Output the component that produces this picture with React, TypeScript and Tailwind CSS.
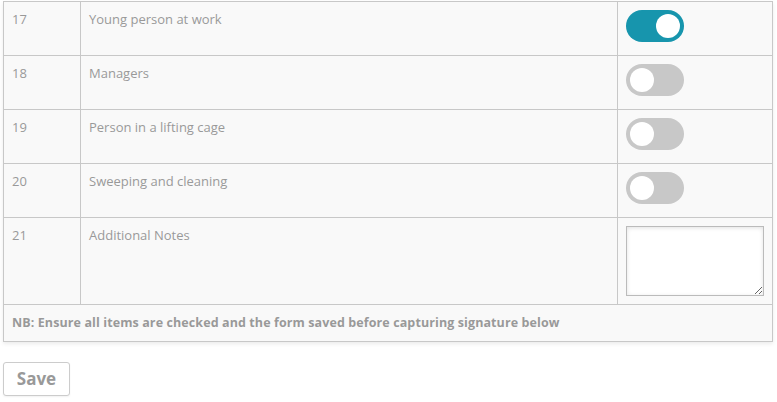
import { useState } from "react";

const rows = [
    { no: 17, label: "Young person at work", on: true },
    { no: 18, label: "Managers", on: false },
    { no: 19, label: "Person in a lifting cage", on: false },
    { no: 20, label: "Sweeping and cleaning", on: false },
];

const Toggle = ({ on, onClick }: { on: boolean; onClick: () => void }) => (
    <button
        type="button"
        onClick={onClick}
        className={`relative w-[58px] h-[32px] rounded-full ${on ? "bg-[#1795ad]" : "bg-[#c8c8c8]"}`}
    >
        <span
            className={`absolute top-[4px] w-[24px] h-[24px] rounded-full bg-white ${on ? "left-[30px]" : "left-[4px]"}`}
        />
    </button>
);

const App = () => {
    const [states, setStates] = useState(rows.map((r) => r.on));

    return (
        <div className="pt-px pl-[3px] pr-[4px] bg-white min-h-[402px]" style={{ fontFamily: "'Open Sans', Lato, sans-serif" }}>
            <table className="w-[770px] border-collapse bg-[#f9f9f9] text-[13px] text-[#999] shadow-[0_2px_4px_rgba(0,0,0,0.08)]">
                <tbody>
                    {rows.map((r, i) => (
                        <tr key={r.no} className="h-[54px]">
                            <td className="w-[77px] border border-[#c8c8c8] align-top px-[8px] pt-[7px] leading-[20px]">{r.no}</td>
                            <td className="w-[537px] border border-[#c8c8c8] align-top px-[8px] pt-[7px] leading-[20px]">{r.label}</td>
                            <td className="border border-[#c8c8c8] align-top px-[8px] pt-[8px]">
                                <Toggle
                                    on={states[i]}
                                    onClick={() => setStates(states.map((s, j) => (j === i ? !s : s)))}
                                />
                            </td>
                        </tr>
                    ))}
                    <tr className="h-[87px]">
                        <td className="border border-[#c8c8c8] align-top px-[8px] pt-[7px] leading-[20px]">21</td>
                        <td className="border border-[#c8c8c8] align-top px-[8px] pt-[7px] leading-[20px]">Additional Notes</td>
                        <td className="border border-[#c8c8c8] align-top px-[8px] py-[8px]">
                            <textarea className="block w-[138px] h-[70px] bg-white border border-[#bbb] shadow-[inset_0_1px_4px_rgba(0,0,0,0.12)] outline-none" />
                        </td>
                    </tr>
                    <tr className="h-[37px]">
                        <td colSpan={3} className="border border-[#c8c8c8] px-[8px] text-[12.5px] font-bold leading-[20px] tracking-[0.1px]">
                            NB: Ensure all items are checked and the form saved before capturing signature below
                        </td>
                    </tr>
                </tbody>
            </table>
            <button
                type="button"
                className="mt-[20px] w-[67px] h-[34px] border border-[#ccc] rounded-[3px] bg-white text-[#999] font-bold text-[17px] shadow-[0_1px_2px_rgba(0,0,0,0.06)]"
            >
                Save
            </button>
        </div>
    );
};

export default App;
